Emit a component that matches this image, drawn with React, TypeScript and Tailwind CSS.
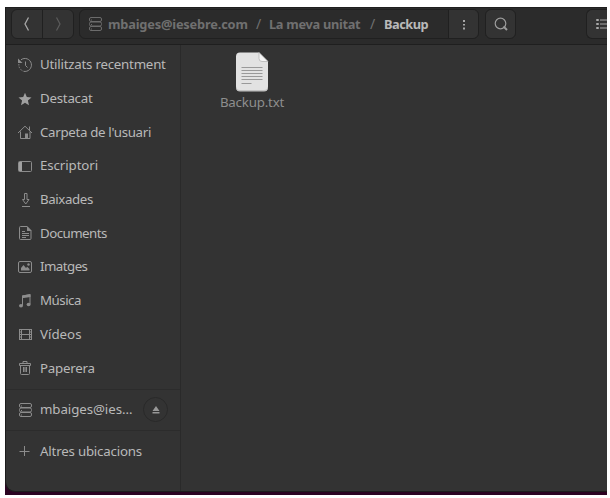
import type { ReactNode } from 'react';

function Icon({ children }: { children: ReactNode }) {
  return (
    <svg width="16" height="16" viewBox="0 0 16 16" fill="none" stroke="#8c8c8c" strokeWidth="1" className="shrink-0">
      {children}
    </svg>
  );
}

const server = (
  <>
    <rect x="2.500" y="1.500" width="12" height="4" rx="1.500" />
    <rect x="2.500" y="6" width="12" height="4" rx="1.500" />
    <rect x="2.500" y="10.500" width="12" height="4" rx="1.500" />
    <path d="M4 4h1M4 8.500h1M4 13h1" />
  </>
);

const places: { label: string; tracking: string; icon: ReactNode }[] = [
  {
    label: 'Utilitzats recentment',
    tracking: 'tracking-[-0.23px]',
    icon: (
      <>
        <path d="M4 2.800A6.500 6.500 0 1 1 6.500 14.300" />
        <path d="M1.900 7A6.500 6.500 0 0 0 6 14" strokeDasharray="1.500 1.200" />
        <path d="M1 1.500v4.500h4.500z" fill="#8c8c8c" stroke="none" />
        <path d="M8.500 4.500v4l2 2" />
      </>
    ),
  },
  {
    label: 'Destacat',
    tracking: 'tracking-[-0.25px]',
    icon: <path d="M8 1.800l1.800 4.300 4.700.4-3.600 3.100 1.100 4.700L8 11.700l-4 2.600 1.100-4.700-3.600-3.100 4.700-.4z" fill="#a0a0a0" stroke="none" />,
  },
  {
    label: "Carpeta de l'usuari",
    tracking: 'tracking-[-0.32px]',
    icon: (
      <>
        <path d="M1 9L8 2.200 15 9M3.500 7.500v7h9.500v-7M12.500 6V2.500" />
        <path d="M8 9.500h3v5H8z" fill="#8c8c8c" stroke="none" />
      </>
    ),
  },
  {
    label: 'Escriptori',
    tracking: 'tracking-[-0.1px]',
    icon: (
      <>
        <rect x="1.500" y="3.500" width="13" height="10" rx="1" />
        <path d="M2 4h3v9H2z" fill="#a0a0a0" stroke="none" />
      </>
    ),
  },
  {
    label: 'Baixades',
    tracking: 'tracking-[-0.4px]',
    icon: <path d="M7.500 1.500h2.500v6h2L8.750 12 5.500 7.500h2zM5 14.500h8" />,
  },
  {
    label: 'Documents',
    tracking: 'tracking-[-0.55px]',
    icon: (
      <>
        <path d="M3.500 1.500H10L14 5.500v8a1 1 0 0 1-1 1H3.500a1 1 0 0 1-1-1v-11a1 1 0 0 1 1-1z" />
        <path d="M10 1l4.500 5H10z" fill="#8c8c8c" stroke="none" />
        <path d="M5 6.500h3M5 8.500h7M5 10.500h7M5 12.500h4" />
      </>
    ),
  },
  {
    label: 'Imatges',
    tracking: 'tracking-[-0.55px]',
    icon: (
      <>
        <rect x="1.500" y="2.500" width="13" height="11" rx="1.500" />
        <path d="M4 11.500V9l2.500-3 2.500 3 1.200-1.200L12.500 10v1.500z" fill="#8c8c8c" stroke="none" />
        <circle cx="11.500" cy="5.500" r="1.200" fill="#8c8c8c" stroke="none" />
      </>
    ),
  },
  {
    label: 'Música',
    tracking: 'tracking-[-0.5px]',
    icon: (
      <>
        <path d="M5.500 12.500V3l7.500-1.300V11" />
        <path d="M5 2.500l8.500-1.400v2.800L5 5.300z" fill="#8c8c8c" stroke="none" />
        <ellipse cx="4" cy="12.700" rx="2" ry="1.700" fill="#8c8c8c" stroke="none" />
        <ellipse cx="11.600" cy="11.500" rx="2" ry="1.700" fill="#8c8c8c" stroke="none" />
      </>
    ),
  },
  {
    label: 'Vídeos',
    tracking: 'tracking-[0px]',
    icon: (
      <>
        <path d="M4.500 3v11M12.500 3v11M4.500 3.500h8M4.500 8.500h8M4.500 13.500h8" />
        <path d="M2.500 3v11M14.500 3v11" />
        <path d="M3.500 3v11M13.500 3v11" strokeDasharray="1 1.500" />
      </>
    ),
  },
  {
    label: 'Paperera',
    tracking: 'tracking-[-0.25px]',
    icon: (
      <>
        <path d="M2.500 3.500h11v2h-11zM6 3.500v-2h4v2M3.500 5.500v8a1 1 0 0 0 1 1h7a1 1 0 0 0 1-1v-8" />
        <path d="M6 7h1v5H6zM9 7h1v5H9z" fill="#8c8c8c" stroke="none" />
        <path d="M7 7h2v5H7z" fill="#656565" stroke="none" />
      </>
    ),
  },
];

function Row({ icon, label, tracking }: { icon: ReactNode; label: string; tracking: string }) {
  return (
    <div className="flex h-[33.7px] items-center gap-[7px] pl-[11px]">
      <Icon>{icon}</Icon>
      <span className={`-mt-px whitespace-nowrap ${tracking}`}>{label}</span>
    </div>
  );
}

export default function App() {
  return (
    <div className="h-[498px] w-[610px] overflow-hidden bg-white pt-[7px] pl-[5px] font-['Noto_Sans',sans-serif] text-[13.3px] leading-[20px] text-[#b9b9b9]">
      <div className="h-[488px] w-[602px] overflow-hidden bg-[#2b0322] pb-[3px]">
        <div className="flex h-full flex-col overflow-hidden rounded-bl-[10px] border-b border-l border-[#1c1c1c] bg-[#333333]">
          <header className="flex h-[38px] shrink-0 items-start border-t border-b border-[#1f1f1f] bg-[#2b2b2b] pt-[1px] pl-[5px]">
            <div className="flex h-[30px] w-[63px] shrink-0 rounded-[6px] border border-[#202020] bg-[#333333]">
              <div className="flex w-[31px] items-center justify-center border-r border-[#202020]">
                <svg width="16" height="16" viewBox="0 0 16 16" fill="none" stroke="#a8a8a8" strokeWidth="1.300"><path d="M9.500 1.500L6 8l3.500 6.500" /></svg>
              </div>
              <div className="flex flex-1 items-center justify-center">
                <svg width="16" height="16" viewBox="0 0 16 16" fill="none" stroke="#5c5c5c" strokeWidth="1.200"><path d="M6.500 1.500L10 8l-3.500 6.500" /></svg>
              </div>
            </div>
            <div className="ml-[5px] flex h-[30px] w-[400px] shrink-0 overflow-hidden rounded-[6px] border border-[#202020] bg-[#2b2b2b]">
              <div className="flex w-[369px] items-center overflow-hidden border-r border-[#202020] pl-[7px] text-[12.8px] font-bold whitespace-nowrap text-[#707070]">
                <svg width="16" height="16" viewBox="0 0 16 16" fill="none" stroke="#6c6c6c" className="shrink-0">{server}</svg>
                <span className="ml-[5px] w-[139px] shrink-0 tracking-[-0.18px]">mbaiges@iesebre.com</span>
                <span className="w-[22px] shrink-0 pl-[9px] text-[14px] font-normal">/</span>
                <span className="w-[92px] shrink-0 tracking-[-0.3px]">La meva unitat</span>
                <span className="w-[23px] shrink-0 pl-[9px] text-[14px] font-normal">/</span>
                <span className="tracking-[-0.5px] text-[#b9b9b9]">Backup</span>
              </div>
              <div className="flex flex-1 items-center justify-center bg-[#333333]">
                <svg width="16" height="16" viewBox="0 0 16 16" fill="#a8a8a8"><path d="M7 4h2v2H7zM7 8h2v1.500H7zM7 11.500h2v2H7z" /></svg>
              </div>
            </div>
            <div className="ml-[6px] flex h-[30px] w-[31px] shrink-0 items-center justify-center rounded-[6px] border border-[#202020] bg-[#333333]">
              <svg width="16" height="16" viewBox="0 0 16 16" fill="none" stroke="#9b9b9b" strokeWidth="1.200"><circle cx="7.500" cy="7.500" r="5.300" /><path d="M10.500 10.500l3.500 3.500" strokeWidth="2" /></svg>
            </div>
            <div className="ml-auto flex h-[30px] w-[21px] shrink-0 items-center overflow-hidden rounded-l-[6px] border-y border-l border-[#202020] bg-[#333333] pl-[8px]">
              <svg width="12" height="16" viewBox="0 0 12 16" fill="none" stroke="#a8a8a8"><path d="M1.500 3.500h2v1h-2zM1.500 7.500h2v1h-2zM1.500 11.500h2v1h-2zM5 4h7M5 8h7M5 12h7" /></svg>
            </div>
          </header>
          <div className="flex min-h-0 flex-1">
            <aside className="w-[175px] shrink-0 border-r border-[#2a2a2a] pt-[3px]">
              {places.map((p) => <Row key={p.label} {...p} />)}
              <div className="mt-[4px] flex h-[41px] items-center border-t border-[#2c2c2c] pl-[11px]">
                <Icon>{server}</Icon>
                <span className="-mt-px ml-[7px] w-[103px] tracking-[-0.08px] whitespace-nowrap">mbaiges@ies…</span>
                <span className="flex h-[25px] w-[25px] items-center justify-center rounded-full border border-[#292929]">
                  <svg width="10" height="10" viewBox="0 0 10 10" fill="#989898"><path d="M5 1l3.500 5h-7zM1.500 7h7v1.500h-7z" /></svg>
                </span>
              </div>
              <div className="flex h-[42px] items-center gap-[7px] border-t border-[#2c2c2c] pl-[11px]">
                <Icon><path d="M7.500 3v10M2.500 8.500h10" /></Icon>
                <span className="tracking-[-0.2px] whitespace-nowrap">Altres ubicacions</span>
              </div>
            </aside>
            <main className="flex-1 bg-[#333333] pt-[6px] pl-[31px]">
              <div className="flex w-[80px] flex-col items-center text-[#8e8e8e]">
                <svg width="34" height="42" viewBox="0 0 34 42">
                  <path d="M5 1.500h19l9 9v25.500a4 4 0 0 1-4 4H5a4 4 0 0 1-4-4v-30.500a4 4 0 0 1 4-4z" fill="#e2e2e2" />
                  <path d="M1 35v2a4 4 0 0 0 4 3.500h24a4 4 0 0 0 4-3.500v-2a4 4 0 0 1-4 4H5a4 4 0 0 1-4-4z" fill="#c3c3c3" />
                  <path d="M24 1.500l9 9h-6a3 3 0 0 1-3-3z" fill="#f5f5f5" stroke="#b5b5b5" strokeWidth=".8" />
                  <path d="M6.500 16.500h21M6.500 19.500h21M6.500 22.500h21M6.500 25.500h21M6.500 28.500h21M6.500 32.500h10" stroke="#999" />
                </svg>
                <span className="-mt-px tracking-[-0.2px]">Backup.txt</span>
              </div>
            </main>
          </div>
        </div>
      </div>
    </div>
  );
}
